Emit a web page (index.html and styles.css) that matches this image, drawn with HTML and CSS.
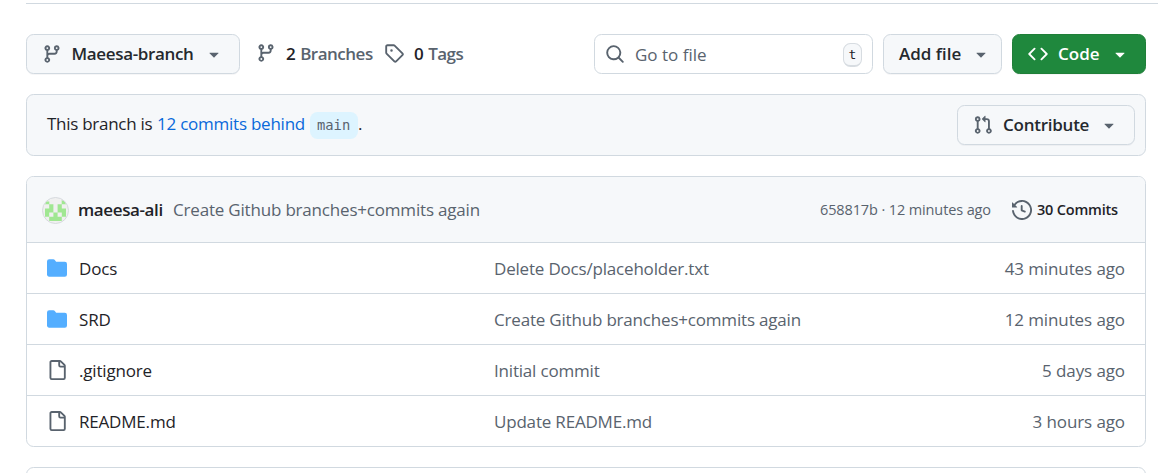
FILE: index.html
```html
<!DOCTYPE html>
<html lang="en">
<head>
<meta charset="utf-8">
<title>Repository files</title>
<link rel="stylesheet" href="styles.css">
</head>
<body>
<svg class="sprite" aria-hidden="true">
  <symbol id="branch" viewBox="0 0 16 16"><path d="M9.5 3.25a2.25 2.25 0 1 1 3 2.122V6A2.5 2.5 0 0 1 10 8.5H6a1 1 0 0 0-1 1v1.128a2.251 2.251 0 1 1-1.5 0V5.372a2.25 2.25 0 1 1 1.5 0v1.836A2.493 2.493 0 0 1 6 7h4a1 1 0 0 0 1-1v-.628A2.25 2.25 0 0 1 9.5 3.25Zm-6 0a.75.75 0 1 0 1.5 0 .75.75 0 0 0-1.5 0Zm8.25-.75a.75.75 0 1 0 0 1.5.75.75 0 0 0 0-1.5ZM4.25 12a.75.75 0 1 0 0 1.5.75.75 0 0 0 0-1.5Z"/></symbol>
  <symbol id="tag" viewBox="0 0 16 16"><path d="M1 7.775V2.75C1 1.784 1.784 1 2.75 1h5.025c.464 0 .91.184 1.238.513l6.25 6.25a1.75 1.75 0 0 1 0 2.474l-5.026 5.026a1.75 1.75 0 0 1-2.474 0l-6.25-6.25A1.752 1.752 0 0 1 1 7.775Zm1.5 0c0 .066.026.13.073.177l6.25 6.25a.25.25 0 0 0 .354 0l5.025-5.025a.25.25 0 0 0 0-.354l-6.25-6.25a.25.25 0 0 0-.177-.073H2.75a.25.25 0 0 0-.25.25ZM6 5a1 1 0 1 1 0 2 1 1 0 0 1 0-2Z"/></symbol>
  <symbol id="search" viewBox="0 0 16 16"><path d="M10.68 11.74a6 6 0 0 1-7.922-8.982 6 6 0 0 1 8.982 7.922l3.04 3.04a.749.749 0 0 1-.326 1.275.749.749 0 0 1-.734-.215ZM11.5 7a4.499 4.499 0 1 0-8.997 0A4.499 4.499 0 0 0 11.5 7Z"/></symbol>
  <symbol id="code" viewBox="0 0 16 16"><path d="m11.28 3.22 4.25 4.25a.75.75 0 0 1 0 1.06l-4.25 4.25a.749.749 0 0 1-1.275-.326.749.749 0 0 1 .215-.734L13.94 8l-3.72-3.72a.749.749 0 0 1 .326-1.275.749.749 0 0 1 .734.215Zm-6.56 0a.751.751 0 0 1 1.042.018.751.751 0 0 1 .018 1.042L2.06 8l3.72 3.72a.749.749 0 0 1-.326 1.275.749.749 0 0 1-.734-.215L.47 8.53a.75.75 0 0 1 0-1.06Z"/></symbol>
  <symbol id="pull" viewBox="0 0 16 16"><path d="M1.5 3.25a2.25 2.25 0 1 1 3 2.122v5.256a2.251 2.251 0 1 1-1.5 0V5.372A2.25 2.25 0 0 1 1.5 3.25Zm5.677-.177L9.573.677A.25.25 0 0 1 10 .854V2.5h1A2.5 2.5 0 0 1 13.5 5v5.628a2.251 2.251 0 1 1-1.5 0V5a1 1 0 0 0-1-1h-1v1.646a.25.25 0 0 1-.427.177L7.177 3.427a.25.25 0 0 1 0-.354ZM3.75 2.5a.75.75 0 1 0 0 1.5.75.75 0 0 0 0-1.5Zm0 9.5a.75.75 0 1 0 0 1.5.75.75 0 0 0 0-1.5Zm8.25.75a.75.75 0 1 0 1.5 0 .75.75 0 0 0-1.5 0Z"/></symbol>
  <symbol id="history" viewBox="0 0 16 16"><path d="m.427 1.927 1.215 1.215a8.002 8.002 0 1 1-1.6 5.685.75.75 0 1 1 1.493-.154 6.5 6.5 0 1 0 1.18-4.458l1.358 1.358A.25.25 0 0 1 3.896 6H.25A.25.25 0 0 1 0 5.75V2.104a.25.25 0 0 1 .427-.177ZM7.75 4a.75.75 0 0 1 .75.75v2.992l2.028.812a.75.75 0 0 1-.557 1.392l-2.5-1A.751.751 0 0 1 7 8.25v-3.5A.75.75 0 0 1 7.75 4Z"/></symbol>
  <symbol id="folder" viewBox="0 0 16 16"><path d="M1.75 1A1.75 1.75 0 0 0 0 2.75v10.5C0 14.216.784 15 1.75 15h12.5A1.75 1.75 0 0 0 16 13.250v-8.500A1.750 1.750 0 0 0 14.250 3H7.500a.25.25 0 0 1-.2-.1l-.9-1.2C6.070 1.260 5.550 1 5 1H1.750Z"/></symbol>
  <symbol id="file" viewBox="0 0 16 16"><path d="M2 1.75C2 .784 2.784 0 3.75 0h6.586c.464 0 .909.184 1.237.513l2.914 2.914c.329.328.513.773.513 1.237v9.586A1.75 1.75 0 0 1 13.25 16h-9.5A1.75 1.75 0 0 1 2 14.25Zm1.75-.25a.25.25 0 0 0-.25.25v12.5c0 .138.112.25.25.25h9.5a.25.25 0 0 0 .25-.25V6h-2.75A1.75 1.75 0 0 1 9 4.25V1.5Zm6.75.062V4.25c0 .138.112.25.25.25h2.688l-.011-.013-2.914-2.914-.013-.011Z"/></symbol>
  <symbol id="caret" viewBox="0 0 16 16"><path d="m4.427 7.427 3.396 3.396a.25.25 0 0 0 .354 0l3.396-3.396A.25.25 0 0 0 11.396 7H4.604a.25.25 0 0 0-.177.427Z"/></symbol>
</svg>
<main class="page">
  <div class="toolbar">
    <button class="btn branch-btn"><svg class="icon"><use href="#branch"/></svg><span class="w-branch">Maeesa-branch</span><svg class="icon"><use href="#caret"/></svg></button>
    <a class="stat stat-branches"><svg class="icon"><use href="#branch"/></svg><span class="w-branches"><b>2</b> Branches</span></a>
    <a class="stat"><svg class="icon"><use href="#tag"/></svg><span class="w-tags"><b>0</b> Tags</span></a>
    <div class="search"><svg class="icon"><use href="#search"/></svg><span class="w-goto">Go to file</span><kbd>t</kbd></div>
    <button class="btn add-btn"><span class="w-add">Add file</span><svg class="icon"><use href="#caret"/></svg></button>
    <button class="btn code-btn"><svg class="icon"><use href="#code"/></svg><span class="w-code">Code</span><svg class="icon"><use href="#caret"/></svg></button>
  </div>

  <section class="banner">
    <p class="behind"><span class="w-this">This branch is </span><a class="w-behind">12 commits behind</a><code>main</code>.</p>
    <button class="btn contribute-btn"><svg class="icon"><use href="#pull"/></svg><span class="w-contribute">Contribute</span><svg class="icon"><use href="#caret"/></svg></button>
  </section>

  <section class="files">
    <header class="commit">
      <svg class="avatar" viewBox="0 0 27 27"><circle cx="13.5" cy="13.5" r="13" fill="#f0f0f0"/><path fill="#a0e792" d="M4.500 4.500h2.800v-1.500v4.300h-4.300zM24 7.300h-4.300v-4.300l2.800 1.500zM7.200 7.200h4.200v4.200h-4.200zM15.600 7.200h4.200v4.200h-4.200zM3 11.400h8.400v4.200h-4.200v4.200h-4.200zM15.600 11.400h8.400v8.400h-4.200v-4.200h-4.200zM11.400 15.600h4.200v4.200h4.200v4.200h-12.600v-4.200h4.200z"/><circle cx="13.5" cy="13.5" r="13" fill="none" stroke="#d5d9dd"/></svg>
      <b class="author">maeesa-ali</b>
      <span class="message">Create Github branches+commits again</span>
      <span class="hash">658817b · 12 minutes ago</span>
      <svg class="icon"><use href="#history"/></svg>
      <b class="count">30 Commits</b>
    </header>
    <div class="row"><svg class="icon folder"><use href="#folder"/></svg><a>Docs</a><span>Delete Docs/placeholder.txt</span><time>43 minutes ago</time></div>
    <div class="row"><svg class="icon folder"><use href="#folder"/></svg><a>SRD</a><span>Create Github branches+commits again</span><time>12 minutes ago</time></div>
    <div class="row"><svg class="icon"><use href="#file"/></svg><a>.gitignore</a><span>Initial commit</span><time>5 days ago</time></div>
    <div class="row"><svg class="icon"><use href="#file"/></svg><a>README.md</a><span>Update README.md</span><time>3 hours ago</time></div>
  </section>
  <section class="readme"></section>
</main>
</body>
</html>
```
FILE: styles.css
```css
* { box-sizing: border-box; }
html, body { height: 100%; }
body {
  margin: 0;
  background: #fff;
  color: #1f2328;
  font: 17px/26px "Open Sans", "Noto Sans", sans-serif;
  letter-spacing: -0.19px;
  overflow: hidden;
  white-space: nowrap;
}
.sprite { display: none; }
.page {
  height: 473px;
  margin-left: 26px;
  width: 1132px;
  padding-top: 3px;
  overflow: hidden;
}
.icon { width: 20px; height: 20px; flex: none; fill: #59636e; }

.toolbar {
  display: flex;
  align-items: flex-start;
  height: 91px;
  padding: 30px 12px 0 0;
  border-top: 1px solid #d1d9e0;
}
.btn {
  display: flex;
  align-items: center;
  height: 40px;
  padding: 0;
  border: 1px solid #d1d9e0;
  border-radius: 7.5px;
  background: #f6f8fa;
  box-shadow: 0 1px 0 rgba(31, 35, 40, 0.04);
  color: #25292e;
  font: 600 17px/26px "Open Sans", "Noto Sans", sans-serif;
  letter-spacing: -0.35px;
}
.btn span { text-align: left; flex: none; }
.branch-btn { width: 214px; padding-left: 15px; }
.w-branch { width: 122px; margin: 0 10px; }
.branch-btn .w-branch { text-indent: -0.5px; }
.stat {
  display: flex;
  align-items: center;
  height: 38px;
  color: #59636e;
  font-weight: 600;
  letter-spacing: -0.5px;
}
.stat b { color: #1f2328; font-weight: 600; margin-right: 1px; }
.stat span { padding-top: 2px; }
.stat-branches { margin: 0 12px 0 16px; }
.w-branches { width: 86px; margin-left: 10px; }
.w-tags { margin-left: 10px; }
.search {
  display: flex;
  align-items: center;
  width: 279px;
  height: 40px;
  margin-left: auto;
  padding: 0 10px;
  border: 1px solid #d1d9e0;
  border-radius: 7.5px;
  color: #59636e;
}
.w-goto { margin-left: 10px; padding-top: 1px; letter-spacing: 0; }
kbd {
  width: 19px;
  height: 24px;
  margin: 1px 0 0 auto;
  border: 1px solid #d7dce1;
  border-bottom-width: 2px;
  border-radius: 7.5px;
  background: #f6f8fa;
  color: #1f2328;
  font: 13px/22px "DejaVu Sans Mono", monospace;
  letter-spacing: 0;
  text-align: center;
}
.add-btn { width: 119px; margin-left: 10px; padding-left: 15px; }
.w-add { width: 62px; margin-right: 10px; letter-spacing: 0; }
.code-btn {
  width: 134px;
  margin-left: 10px;
  padding-left: 15px;
  border-color: #1f7f38;
  background: #1f883d;
  color: #fff;
}
.code-btn .icon { fill: #fff; }
.w-code { width: 42px; margin: 0 10px; letter-spacing: 0; }

.banner {
  display: flex;
  justify-content: space-between;
  width: 1120px;
  height: 62px;
  padding: 10px 10px 0 20px;
  border: 1px solid #d1d9e0;
  border-radius: 7.5px;
  background: #f6f8fa;
}
.behind { display: flex; margin: 6px 0 0; }
.w-this { width: 110px; white-space: pre; letter-spacing: -0.28px; }
.w-behind { width: 148px; color: #0969da; letter-spacing: -0.24px; }
code {
  height: 27px;
  margin: 1px 0 0 5px;
  padding: 0 7px;
  width: 48px;
  border-radius: 7.5px;
  background: #ddf4ff;
  color: #59636e;
  font: 13.8px/27px "DejaVu Sans Mono", monospace;
  letter-spacing: 0;
}
.contribute-btn { width: 178px; padding-left: 15px; }
.w-contribute { width: 86px; margin: 0 10px; letter-spacing: -0.25px; }

.files {
  width: 1120px;
  height: 271px;
  margin-top: 20px;
  border: 1px solid #d1d9e0;
  border-radius: 7.5px;
  overflow: hidden;
}
.commit {
  display: flex;
  align-items: center;
  height: 65px;
  padding: 0 26px 0 15px;
  background: #f6f8fa;
}
.avatar { width: 27px; height: 27px; margin-top: 2px; }
.author { width: 85px; margin: 0 10px 0 9px; font-weight: 600; letter-spacing: -0.38px; }
.message { color: #59636e; }
.hash { margin-left: auto; width: 172px; font-size: 14.5px; color: #59636e; letter-spacing: -0.12px; }
.commit .icon { margin: 0 5px 0 20px; }
.count { width: 82px; font-size: 14.5px; font-weight: 600; }
.row {
  display: grid;
  grid-template-columns: 20px 415px 1fr auto;
  align-items: center;
  height: 51px;
  padding: 0 20px;
  border-top: 1px solid #d1d9e0;
}
.row a { padding: 1px 0 0 12px; }
.row span, .row time { padding-top: 1px; color: #59636e; }
.row time { letter-spacing: -0.1px; }
.row span { padding-left: 12px; }
.row .folder { fill: #54aeff; }
.readme {
  width: 1120px;
  height: 30px;
  margin-top: 20px;
  border: 1px solid #d1d9e0;
  border-radius: 7.5px;
}
```
